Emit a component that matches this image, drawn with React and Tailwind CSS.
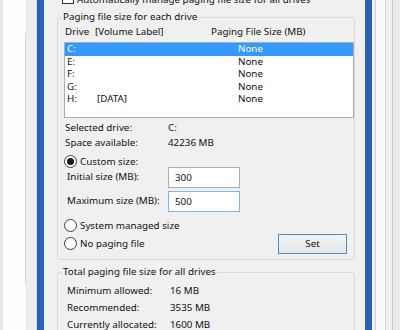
import React from "react";

const drives = [
  { drive: "C:", label: "", size: "None", selected: true },
  { drive: "E:", label: "", size: "None" },
  { drive: "F:", label: "", size: "None" },
  { drive: "G:", label: "", size: "None" },
  { drive: "H:", label: "[DATA]", size: "None" },
];

function Radio({ checked, children }) {
  return (
    <div className="flex items-center h-[13px] pl-[6px]">
      <span className="w-[13px] h-[13px] rounded-full border border-[#3c3c3c] bg-white flex items-center justify-center">
        {checked && <span className="w-[7px] h-[7px] rounded-full bg-[#1a1a1a]" />}
      </span>
      <span className="ml-[3px] leading-[13px]">{children}</span>
    </div>
  );
}

function SizeInput({ label, value, focused }) {
  return (
    <div className="flex items-center h-[21px] pl-[9px]">
      <span className="w-[101px]">{label}</span>
      <div
        className={
          focused
            ? "w-[72px] h-[21px] border border-[#7eb4ea] bg-white pl-[6px] leading-[19px]"
            : "w-[72px] h-[21px] border border-[#abadb3] bg-white pl-[6px] leading-[19px]"
        }
      >
        {value}
      </div>
    </div>
  );
}

export default function App() {
  return (
    <div className="flex w-[400px] h-[330px] overflow-hidden bg-[#f0f0f0] text-[9.8px] text-[#111] font-['Noto_Sans',sans-serif]">
      {/* window behind, left edge */}
      <div className="flex w-[37px] shrink-0">
        <div className="w-[3px] bg-[#e6e6e6]" />
        <div className="w-[22px] bg-[#fdfdfd]" />
        <div className="w-[1px] flex flex-col bg-[#fdfdfd]">
          <div className="h-[33px]" />
          <div className="h-[252px] bg-[#d6d6d6]" />
        </div>
        <div className="w-[10px] bg-[#eeeeee]" />
        <div className="w-[1px] bg-[#d4d4d4]" />
      </div>
      <div className="w-[7px] shrink-0 bg-[#2d61b4]" />

      {/* dialog */}
      <div className="w-[321px] shrink-0 pl-[13px]">
        <div className="flex items-center h-[12px] mt-[-8px] pl-[5px]">
          <span className="w-[12px] h-[12px] border border-[#333] bg-white" />
          <span className="ml-[3px] pt-[4px]">Automatically manage paging file size for all drives</span>
        </div>

        <fieldset className="w-[298px] mt-[5px] border border-[#d9d9d9] rounded-[3px] pb-[5px]">
          <legend className="ml-[4px] px-[1px] h-[16px] leading-[16px]">Paging file size for each drive</legend>
          <div className="flex h-[14px] leading-[14px] pl-[7px]">
            <span className="w-[30px]">Drive</span>
            <span className="w-[116px]">[Volume Label]</span>
            <span>Paging File Size (MB)</span>
          </div>
          <div className="ml-[6px] mt-[3px] w-[290px] h-[76px] border border-[#abadb3] bg-white">
            {drives.map((d) => (
              <div
                key={d.drive}
                className={
                  d.selected
                    ? "flex h-[12.5px] leading-[12.5px] pl-[2px] bg-[#3399ff] text-white"
                    : "flex h-[12.5px] leading-[12.5px] pl-[2px]"
                }
              >
                <span className="w-[30px]">{d.drive}</span>
                <span className="w-[141px]">{d.label}</span>
                <span>{d.size}</span>
              </div>
            ))}
          </div>

          <div className="mt-[2px] pl-[7px]">
            <div className="flex h-[15px] leading-[15px]">
              <span className="w-[103px]">Selected drive:</span>
              <span>C:</span>
            </div>
            <div className="flex h-[15px] leading-[15px]">
              <span className="w-[103px]">Space available:</span>
              <span>42236 MB</span>
            </div>
          </div>

          <div className="mt-[5px]">
            <Radio checked>Custom size:</Radio>
          </div>
          <div className="mt-[-1px] flex flex-col gap-[3px]">
            <SizeInput label="Initial size (MB):" value="300" />
            <SizeInput label="Maximum size (MB):" value="500" focused />
          </div>

          <div className="mt-[7px] flex justify-between">
            <div className="flex flex-col gap-[5px]">
              <Radio>System managed size</Radio>
              <Radio>No paging file</Radio>
            </div>
            <button className="mt-[15px] mr-[7px] w-[69px] h-[20px] border border-[#4a8fd6] bg-gradient-to-b from-[#f3f3f3] to-[#e5e5e5] leading-[18px]">
              Set
            </button>
          </div>
        </fieldset>

        <fieldset className="w-[298px] mt-[4px] border border-[#d9d9d9] rounded-[3px]">
          <legend className="ml-[4px] px-[1px] h-[16px] leading-[16px]">Total paging file size for all drives</legend>
          <div className="mt-[2px] pl-[9px]">
            <div className="flex h-[17px] leading-[17px]">
              <span className="w-[103px]">Minimum allowed:</span>
              <span>16 MB</span>
            </div>
            <div className="flex h-[17px] leading-[17px]">
              <span className="w-[103px]">Recommended:</span>
              <span>3535 MB</span>
            </div>
            <div className="flex h-[17px] leading-[17px]">
              <span className="w-[103px]">Currently allocated:</span>
              <span>1600 MB</span>
            </div>
          </div>
        </fieldset>
      </div>

      <div className="w-[7px] shrink-0 bg-[#2d61b4]" />
      {/* window behind, right edge */}
      <div className="flex w-[28px] shrink-0">
        <div className="w-[3px] bg-[#f4f4f4]" />
        <div className="w-[1px] bg-[#d2d2d2]" />
        <div className="w-[9px] bg-[#fafafa]" />
        <div className="w-[1px] bg-[#d6d6d6]" />
        <div className="w-[6px] bg-[#efefef]" />
        <div className="w-[1px] bg-[#c8c8c8]" />
        <div className="w-[7px] bg-[#ebebeb]" />
      </div>
    </div>
  );
}
